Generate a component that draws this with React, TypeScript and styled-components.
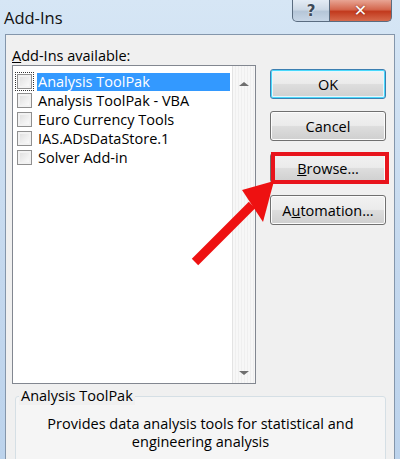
import React from "react";
import styled, { createGlobalStyle } from "styled-components";

const GlobalStyle = createGlobalStyle`
  html, body {
    margin: 0;
    padding: 0;
    background: #c9dcf0;
  }
  body {
    font-family: "Segoe UI", "Open Sans", "Noto Sans", sans-serif;
    color: #000;
  }
`;

const Window = styled.div`
  position: relative;
  width: 400px;
  height: 459px;
  overflow: hidden;
  background: linear-gradient(180deg, #d6e6f5 0%, #c4d8ee 60%, #bcd3ec 100%);
  display: flex;
  flex-direction: column;
  padding: 0 5px 0 5px;
  box-sizing: border-box;
`;

const TitleBar = styled.div`
  height: 34px;
  display: flex;
  align-items: flex-start;
  justify-content: space-between;
  flex-shrink: 0;
`;

const Title = styled.div`
  font-size: 16.5px;
  margin: 6px 0 0 -1px;
  color: #111;
`;

const Caption = styled.div`
  display: flex;
  margin-right: 3px;
  height: 22px;
`;

const CaptionButton = styled.div<{ $close?: boolean }>`
  width: ${({ $close }) => ($close ? "62px" : "38px")};
  height: 22px;
  box-sizing: border-box;
  border: 1px solid #5a6c80;
  border-top: none;
  border-left: ${({ $close }) => ($close ? "none" : "1px solid #5a6c80")};
  border-radius: ${({ $close }) => ($close ? "0 0 5px 0" : "0 0 0 5px")};
  background: ${({ $close }) =>
    $close
      ? "linear-gradient(180deg, #e8a594 0%, #d4674e 45%, #c23a1e 55%, #d66a4c 100%)"
      : "linear-gradient(180deg, #e4ecf5 0%, #cdd9e6 45%, #b5c6d8 55%, #c7d6e6 100%)"};
  display: flex;
  align-items: center;
  justify-content: center;
  color: ${({ $close }) => ($close ? "#fff" : "#3d4a5a")};
  font-family: "DejaVu Sans", sans-serif;
  font-weight: bold;
  font-size: ${({ $close }) => ($close ? "16px" : "15px")};
  text-shadow: ${({ $close }) =>
    $close ? "0 0 2px #7a1a0a" : "0 0 2px #ffffff"};
`;

const Client = styled.div`
  flex: 1;
  background: #f0f0f0;
  border: 1px solid #8496ab;
  border-bottom: none;
  padding: 12px 6px 0 6px;
  display: flex;
  flex-direction: column;
`;

const MainRow = styled.div`
  display: flex;
  gap: 14px;
`;

const LeftCol = styled.div`
  display: flex;
  flex-direction: column;
`;

const Label = styled.div`
  font-size: 14.5px;
  line-height: 17px;
  height: 17px;
  u {
    text-decoration: underline;
  }
`;

const ListBox = styled.div`
  width: 244px;
  height: 319px;
  box-sizing: border-box;
  border: 1px solid #828790;
  background: #fff;
  display: flex;
  margin-top: 1px;
`;

const Items = styled.div`
  flex: 1;
  padding: 6px 2px 0 4px;
  display: flex;
  flex-direction: column;
`;

const Item = styled.div`
  height: 19px;
  display: flex;
  align-items: center;
  gap: 5px;
  font-size: 14.5px;
`;

const Check = styled.span<{ $focus?: boolean }>`
  width: 15px;
  height: 15px;
  box-sizing: border-box;
  border: 1px solid #8f8f8f;
  background: linear-gradient(135deg, #dcdcdc 0%, #f4f4f4 70%, #ffffff 100%);
  box-shadow: inset 0 0 0 2px #f2f2f2;
  outline: ${({ $focus }) => ($focus ? "1px dotted #333" : "none")};
  outline-offset: 1px;
  flex-shrink: 0;
`;

const ItemText = styled.span<{ $selected?: boolean }>`
  flex: 1;
  height: 18px;
  line-height: 18px;
  padding-left: 1px;
  background: ${({ $selected }) => ($selected ? "#3399ff" : "transparent")};
  color: ${({ $selected }) => ($selected ? "#fff" : "#000")};
  white-space: nowrap;
`;

const ScrollBar = styled.div`
  width: 22px;
  border-left: 1px solid #e3e3e3;
  background: repeating-linear-gradient(
    90deg,
    #f7f7f7 0px,
    #f7f7f7 2px,
    #efefef 2px,
    #efefef 3px
  );
  display: flex;
  flex-direction: column;
  justify-content: space-between;
  align-items: center;
  padding: 16px 0 8px 0;
`;

const Arrow = styled.span<{ $down?: boolean }>`
  width: 0;
  height: 0;
  border-left: 5px solid transparent;
  border-right: 5px solid transparent;
  ${({ $down }) =>
    $down ? "border-top: 4px solid #6f6f6f;" : "border-bottom: 4px solid #6f6f6f;"}
`;

const RightCol = styled.div`
  display: flex;
  flex-direction: column;
  gap: 12px;
  padding-top: 22px;
`;

const Button = styled.div<{ $default?: boolean; $marked?: boolean }>`
  position: relative;
  width: 116px;
  height: 30px;
  box-sizing: border-box;
  border: 1px solid ${({ $default }) => ($default ? "#3c7fb1" : "#707070")};
  border-radius: 3px;
  background: linear-gradient(180deg, #f2f2f2 0%, #ebebeb 48%, #dddddd 52%, #cfcfcf 100%);
  box-shadow: ${({ $default }) =>
    $default ? "inset 0 0 0 1px #48d8fb, inset 0 0 0 2px #e6f6fd" : "inset 0 0 0 1px #fcfcfc"};
  display: flex;
  align-items: center;
  justify-content: center;
  font-size: 14.5px;
  u {
    text-decoration: underline;
  }
  ${({ $marked }) =>
    $marked
      ? `&::after {
    content: "";
    position: absolute;
    left: 0px;
    right: -4px;
    top: -2px;
    bottom: -2px;
    border: 4px solid #e8141c;
  }`
      : ""}
`;

const GroupBox = styled.fieldset`
  margin: 3px 2px 0 3px;
  padding: 10px 0 30px 0;
  border: 1px solid #d5dfe5;
  border-radius: 3px;
  background: #f5f5f5;
  text-align: center;
  font-size: 14.5px;
  line-height: 18px;
`;

const Legend = styled.legend`
  text-align: left;
  padding: 0 2px;
  margin-left: 3px;
  font-size: 14.5px;
  background: #f0f0f0;
`;

const Overlay = styled.svg`
  position: absolute;
  left: 0;
  top: 0;
  pointer-events: none;
`;

const items = [
  "Analysis ToolPak",
  "Analysis ToolPak - VBA",
  "Euro Currency Tools",
  "IAS.ADsDataStore.1",
  "Solver Add-in",
];

export default function App() {
  return (
    <>
      <GlobalStyle />
      <Window>
        <TitleBar>
          <Title>Add-Ins</Title>
          <Caption>
            <CaptionButton>?</CaptionButton>
            <CaptionButton $close>✕</CaptionButton>
          </Caption>
        </TitleBar>
        <Client>
          <MainRow>
            <LeftCol>
              <Label>
                <u>A</u>dd-Ins available:
              </Label>
              <ListBox>
                <Items>
                  {items.map((t, i) => (
                    <Item key={t}>
                      <Check $focus={i === 0} />
                      <ItemText $selected={i === 0}>{t}</ItemText>
                    </Item>
                  ))}
                </Items>
                <ScrollBar>
                  <Arrow />
                  <Arrow $down />
                </ScrollBar>
              </ListBox>
            </LeftCol>
            <RightCol>
              <Button $default>OK</Button>
              <Button>Cancel</Button>
              <Button $marked>
                <span>
                  <u>B</u>rowse...
                </span>
              </Button>
              <Button>
                <span>
                  A<u>u</u>tomation...
                </span>
              </Button>
            </RightCol>
          </MainRow>
          <GroupBox>
            <Legend>Analysis ToolPak</Legend>
            Provides data analysis tools for statistical and
            <br />
            engineering analysis
          </GroupBox>
        </Client>
        <Overlay width="400" height="459" viewBox="0 0 400 459">
          <line
            x1="195"
            y1="262"
            x2="252"
            y2="205"
            stroke="#ee1111"
            strokeWidth="9"
          />
          <polygon points="274,181 242,190 263,222" fill="#ee1111" />
        </Overlay>
      </Window>
    </>
  );
}
